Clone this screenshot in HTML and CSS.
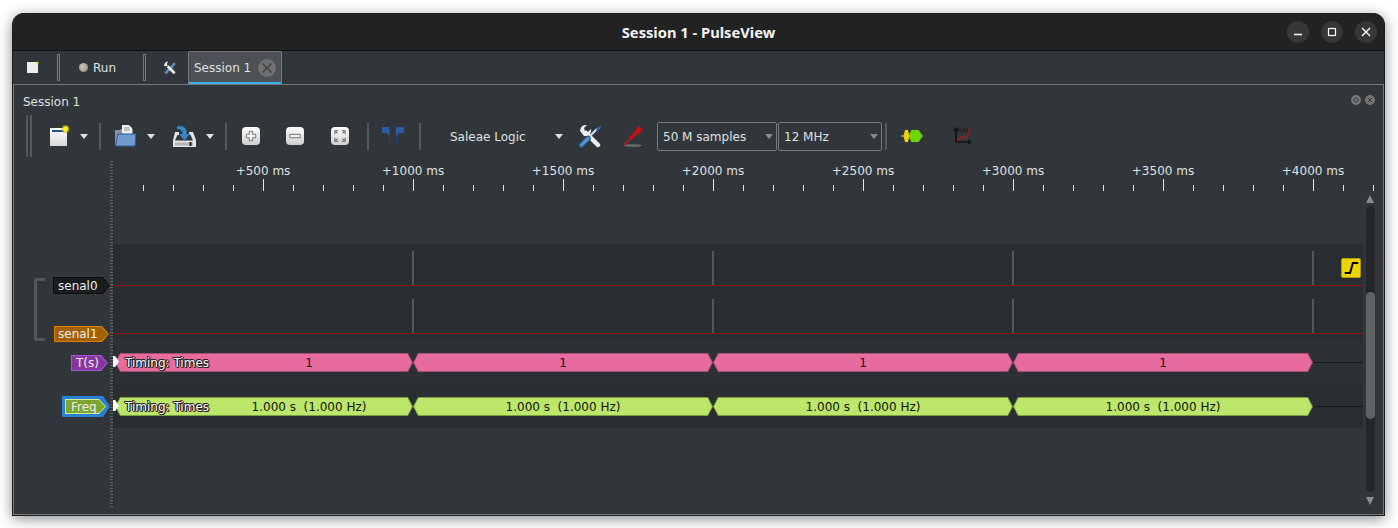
FILE: index.html
```html
<!DOCTYPE html>
<html lang="en">
<head>
<meta charset="utf-8">
<title>Session 1 - PulseView</title>
<link rel="stylesheet" href="styles.css">
</head>
<body>
<div class="window">
  <header class="titlebar">
    <div class="title">Session 1 - PulseView</div>
    <div class="winbtns">
      <div class="winbtn"><svg class="wi" viewBox="0 0 12 12"><path d="M2 8.500h8" stroke="#fff" stroke-width="1.400"/></svg></div>
      <div class="winbtn"><svg class="wi" viewBox="0 0 12 12"><rect x="2.500" y="2.500" width="7" height="7" fill="none" stroke="#fff" stroke-width="1.200"/></svg></div>
      <div class="winbtn"><svg class="wi" viewBox="0 0 12 12"><path d="M2 2l8 8M10 2l-8 8" stroke="#fff" stroke-width="1.400"/></svg></div>
    </div>
  </header>

  <nav class="tabbar">
    <svg class="tab-new" viewBox="0 0 12 12"><rect x="0" y="1" width="11" height="11" fill="#eee"/><circle cx="10" cy="2" r="1.500" fill="#e8dc5a"/></svg>
    <div class="tab-sep"></div>
    <div class="run"><span class="led"></span><span>Run</span></div>
    <div class="tab-sep"></div>
    <svg class="tab-tools" viewBox="0 0 24 24"><path d="M4 21L17 8" stroke="#5a93c9" stroke-width="4.500"/><path d="M20 21L8 9" stroke="#eee" stroke-width="4.500"/><path d="M2 8A6.500 6.500 0 0 1 9 1L6.500 4.500 8 8 4.500 9z" fill="#eee"/><path d="M15 6l4-4 3 3-4 4z" fill="#5a93c9"/></svg>
    <div class="tab"><span>Session 1</span><svg class="tab-close" viewBox="0 0 18 18"><circle cx="9" cy="9" r="9" fill="#707070"/><path d="M4.500 4.500l9 9M13.500 4.500l-9 9" stroke="#3a3a3a" stroke-width="1.200"/></svg></div>
  </nav>

  <main class="panel">
    <div class="dock-title">
      <span>Session 1</span>
      <div class="dock-btns">
        <svg class="dock-btn" viewBox="0 0 10 10"><circle cx="5" cy="5" r="5" fill="#767676"/><path d="M5 2.500L7.500 5 5 7.500 2.500 5z" fill="none" stroke="#333" stroke-width=".9"/></svg>
        <svg class="dock-btn" viewBox="0 0 10 10"><circle cx="5" cy="5" r="5" fill="#767676"/><path d="M2.800 2.800l4.400 4.400M7.200 2.800l-4.400 4.400" stroke="#333" stroke-width="1"/></svg>
      </div>
    </div>

    <div class="toolbar">
      <div class="handle"></div>
      <div class="btn ml8"><svg class="ic" viewBox="0 0 24 24"><defs><linearGradient id="paper" x1="0" y1="0" x2="0" y2="1"><stop offset="0" stop-color="#fff"/><stop offset="1" stop-color="#d8d8d8"/></linearGradient><radialGradient id="glow"><stop offset=".45" stop-color="#ffee20"/><stop offset="1" stop-color="#b8a820" stop-opacity=".5"/></radialGradient></defs><rect x="3" y="4" width="17" height="18" fill="url(#paper)"/><rect x="5" y="6" width="12" height="2" fill="#274f94"/><circle cx="18.500" cy="5" r="4" fill="url(#glow)"/></svg></div>
      <div class="arrow"></div>
      <div class="sep ml9"></div>
      <div class="btn ml5"><svg class="ic" viewBox="0 0 24 24"><path d="M2 6h5l1-1h12v17H2z" fill="#8d9299"/><path d="M9 1h7l3 3v10H9z" fill="#eee"/><path d="M11 4h5M11 6h6" stroke="#999"/><path d="M5 10h18l-1 12H2.500z" fill="#6f9bd1" stroke="#2b5c9f"/></svg></div>
      <div class="arrow ml1"></div>
      <div class="btn ml8"><svg class="ic" viewBox="0 0 24 24"><path d="M3 8h4v3H5.500L3 16.500h18L18.500 11H17V8h4l3 8v7H1v-7z" fill="#e4e4e4"/><rect x="3" y="18.500" width="18" height="3" fill="#b4b4b4"/><rect x="17.500" y="18" width="2" height="4" fill="#222"/><path d="M5 2.500c5-1.500 8.500.5 9.500 4.500v3h3.500l-5.500 6.500L7 10h3.500V8.500C9.500 6 7.500 5 5 5z" fill="#3c86c6" stroke="#1f5a92" stroke-width=".6"/></svg></div>
      <div class="arrow ml1"></div>
      <div class="sep ml9"></div>
      <div class="btn ml5"><div class="zoomkey"><svg class="zk" viewBox="0 0 14 14"><path d="M5 1.500h4v3.500h3.500v4H9v3.500H5V9H1.500V5H5z" fill="#f4f4f4" stroke="#666"/></svg></div></div>
      <div class="btn ml6"><div class="zoomkey"><svg class="zk" viewBox="0 0 14 14"><rect x="1" y="5" width="12" height="4" fill="#f4f4f4" stroke="#666"/></svg></div></div>
      <div class="btn ml7"><div class="zoomkey"><svg class="zk" viewBox="0 0 14 14"><path d="M1 5V1h4M2 2l2 2M9 1h4v4M12 2l-2 2M13 9v4H9M12 12l-2-2M5 13H1V9M2 12l2-2" fill="none" stroke="#666" stroke-width="1.200"/></svg></div></div>
      <div class="sep ml8"></div>
      <div class="btn ml5"><svg class="ic" viewBox="0 0 24 24"><path d="M1 3h8v9.500L6 9H1z" fill="#2a5ca8"/><path d="M8.500 3v18M15.500 3v18" stroke="#1d477f"/><path d="M15 3h8v6h-5l-3 3.500z" fill="#2a5ca8"/></svg></div>
      <div class="sep ml7"></div>
      <div class="device"><span>Saleae Logic</span><div class="arrow"></div></div>
      <div class="btn ml6"><svg class="ic" viewBox="0 0 24 24"><path d="M20 21L8 9" stroke="#f0f0f0" stroke-width="4.500" stroke-linecap="round"/><path d="M2 7A6 6 0 0 1 9 1L6 4l1 3 3 1 3-3a6 6 0 0 1-7 7z" fill="#f0f0f0"/><path d="M10 14l9-9" stroke="#cfe0f0" stroke-width="2.200"/><path d="M18 6l2-3 3-1-1 3-3 2z" fill="#2e6cab"/><path d="M3.500 21L10 14.500" stroke="#24588f" stroke-width="5.500" stroke-linecap="round"/><path d="M3.500 21L10 14.500" stroke="#5b96cf" stroke-width="3" stroke-linecap="round"/></svg></div>
      <div class="btn ml5"><svg class="ic" viewBox="0 0 24 24"><ellipse cx="12" cy="21.500" rx="9" ry="1.300" fill="#6a6a6a"/><path d="M3 21L10 14" stroke="#d01010" stroke-width="1.400"/><path d="M9 15l8-8" stroke="#c81010" stroke-width="3.800"/><path d="M16 8l4-4" stroke="#c81010" stroke-width="5.500"/></svg></div>
      <div class="combo ml5"><span>50 M samples</span><div class="arrow dim"></div></div>
      <div class="combo short ml1"><span>12 MHz</span><div class="arrow dim"></div></div>
      <div class="sep ml3"></div>
      <div class="btn ml5"><svg class="ic" viewBox="0 0 24 24"><path d="M2 12h22" stroke="#d8d8d8"/><path d="M4.500 12l1.500-6h3l1.500 6-1.500 6H6z" fill="#f0d000"/><path d="M10.500 10l2-4h7l3 4v4l-3 4h-7l-2-4z" fill="#6fd700"/></svg></div>
      <div class="btn ml13"><svg class="ic" viewBox="0 0 24 24"><path d="M6 5v13h14M4 7l2-3 2 3M18 16l3 2-3 2" fill="none" stroke="#111" stroke-width="1.500"/><path d="M7 17c2-1 3-5 5-4s3 2 5 0 1-5 3-9" fill="none" stroke="#b01818" stroke-width="1.200"/><text x="8" y="8" class="fx">f(x)</text></svg></div>
    </div>

    <section class="view">
      <div class="ruler">
        <div class="ruler-labels">
          <span>+500 ms</span><span>+1000 ms</span><span>+1500 ms</span><span>+2000 ms</span><span>+2500 ms</span><span>+3000 ms</span><span>+3500 ms</span><span>+4000 ms</span>
        </div>
        <div class="ticks"></div>
      </div>
      <div class="viewbody">
        <div class="rows">
          <div class="row-gap"></div>
          <div class="row sig">
            <div class="lab"><div class="tag t-black">senal0</div></div>
            <div class="trace dark"><div class="wave"><i></i><i></i><i></i><i></i></div><div class="trigger"><svg class="trig-ic" viewBox="0 0 20 20"><path d="M3 15.500h6L12 4.500h6" fill="none" stroke="#000" stroke-width="2.200"/></svg></div></div>
          </div>
          <div class="row sig">
            <div class="lab l2"><div class="tag t-orange">senal1</div></div>
            <div class="trace dark"><div class="wave"><i></i><i></i><i></i><i></i></div></div>
          </div>
          <div class="row dec">
            <div class="lab l3"><div class="tag t-purple">T(s)</div></div>
            <div class="trace mid">
              <div class="bars pink">
                <div class="bar first"><span class="cap">Timing: Times</span><span class="val">1</span></div>
                <div class="bar"><span class="val">1</span></div>
                <div class="bar"><span class="val">1</span></div>
                <div class="bar"><span class="val">1</span></div>
                <div class="tail"></div>
              </div>
              <div class="flag"></div>
            </div>
          </div>
          <div class="row dec">
            <div class="lab l4"><div class="tag t-green"><span>Freq</span></div></div>
            <div class="trace dark">
              <div class="bars lime">
                <div class="bar first"><span class="cap">Timing: Times</span><span class="val">1.000 s  (1.000 Hz)</span></div>
                <div class="bar"><span class="val">1.000 s  (1.000 Hz)</span></div>
                <div class="bar"><span class="val">1.000 s  (1.000 Hz)</span></div>
                <div class="bar"><span class="val">1.000 s  (1.000 Hz)</span></div>
                <div class="tail"></div>
              </div>
              <div class="flag"></div>
            </div>
          </div>
          <div class="bracket"></div>
        </div>
        <div class="vscroll">
          <div class="sb-up"></div>
          <div class="sb-track"><div class="sb-handle"></div></div>
          <div class="sb-down"></div>
        </div>
      </div>
      <div class="header-rule"></div>
    </section>
  </main>
</div>
</body>
</html>
```
FILE: styles.css
```css
* { box-sizing: border-box; }
html, body { margin: 0; height: 528px; overflow: hidden; background: #fff; }
body { padding: 13px 0 0 12px; font: 12px/1 "DejaVu Sans", sans-serif; color: #dfe1e2; }
.window {
  width: 1373px; height: 503px;
  background: #31363b;
  border: 1px solid #1c1c1c; border-top: 0;
  border-radius: 12px 12px 0 0;
  box-shadow: 0 3px 14px rgba(0,0,0,.45);
  display: flex; flex-direction: column;
  overflow: hidden;
}

/* title bar */
.titlebar {
  flex: none; height: 38px; background: #222;
  border-bottom: 1px solid #111;
  display: flex; align-items: center; justify-content: center;
  position: relative;
}
.title { font: 700 14.700px "Noto Sans", sans-serif; color: #f2f2f2; }
.winbtns { position: absolute; right: 7px; top: 8px; display: flex; gap: 12px; }
.winbtn { width: 22px; height: 22px; border-radius: 50%; background: #373737; display: flex; align-items: center; justify-content: center; }
.wi { width: 12px; height: 12px; }

/* tab bar */
.tabbar { flex: none; height: 33px; display: flex; align-items: center; padding-left: 14px; background: #31363b; }
.tab-new { width: 12px; height: 12px; margin: -2px 18px 0 0; }
.tab-sep { width: 3px; height: 27px; border: 1px solid #76797c; }
.run { width: 83px; display: flex; align-items: center; gap: 5px; padding-left: 19px; font-size: 12px; }
.led { width: 9px; height: 9px; border-radius: 50%; background: radial-gradient(circle at 40% 40%, #c9c9c0, #84847c); }
.tab-tools { width: 14px; height: 14px; margin: 0 11px 0 17px; }
.tab {
  width: 94px; height: 33px; align-self: flex-end;
  background: #4d5156; border: 1px solid #76797c; border-bottom: 0; border-radius: 2px 2px 0 0;
  box-shadow: inset 0 -2px 0 #3daee9;
  display: flex; align-items: center; justify-content: space-between; padding: 0 5px 1px 5px;
}
.tab-close { width: 18px; height: 18px; }

/* dock panel */
.panel { flex: 1; border: 1px solid #76797c; display: flex; flex-direction: column; min-height: 0; }
.dock-title { flex: none; height: 27px; padding: 11px 8px 0 9px; display: flex; justify-content: space-between; }
.dock-btns { display: flex; gap: 4px; margin-top: -1px; }
.dock-btn { width: 10px; height: 10px; }

/* toolbar */
.toolbar { flex: none; height: 48px; padding-left: 12px; display: flex; align-items: center; }
.handle { width: 6px; height: 42px; border-left: 2px solid #55595d; border-right: 2px solid #55595d; }
.btn { width: 38px; height: 30px; flex: none; display: flex; align-items: center; justify-content: center; }
.ic { width: 24px; height: 24px; }
.arrow { width: 12px; flex: none; height: 5px; position: relative; }
.arrow::after { content: ""; position: absolute; left: 2px; top: 0; border: 4px solid transparent; border-top: 5px solid #dfe1e2; border-bottom: 0; }
.arrow.dim::after { border-top-color: #8a8d90; }
.sep { width: 2px; height: 27px; flex: none; background: #55595d; }
.ml1 { margin-left: 1px; } .ml3 { margin-left: 3px; } .ml5 { margin-left: 5px; } .ml6 { margin-left: 6px; }
.ml7 { margin-left: 7px; } .ml8 { margin-left: 8px; } .ml9 { margin-left: 9px; } .ml13 { margin-left: 13px; }
.zoomkey { width: 18px; height: 18px; border-radius: 4px; background: linear-gradient(#fff, #cfcfcf); display: flex; align-items: center; justify-content: center; }
.zk { width: 12px; height: 12px; }
.fx { font: 6px "DejaVu Sans", sans-serif; fill: #111; }
.device { width: 136px; margin-left: 8px; flex: none; padding: 1px 0 0 21px; display: flex; align-items: center; justify-content: space-between; }
.combo { width: 120px; height: 29px; flex: none; border: 1px solid #76797c; border-radius: 2px; display: flex; align-items: center; justify-content: space-between; padding: 1px 1px 0 5px; }
.combo.short { width: 104px; }

/* trace view */
.view { flex: 1; display: flex; flex-direction: column; position: relative; min-height: 0; }
.ruler { flex: none; height: 32px; padding-left: 99px; }
.ruler-labels { height: 19px; padding: 2px 0 0 75px; display: flex; align-items: center; }
.ruler-labels span { width: 150px; flex: none; text-align: center; }
.ticks {
  margin-left: 30px; width: 1231px; height: 12px;
  background:
    repeating-linear-gradient(90deg, transparent 0 120px, #e6e6e6 120px 121px, transparent 121px 150px) top / 100% 12px no-repeat,
    repeating-linear-gradient(90deg, #e6e6e6 0 1px, transparent 1px 30px) bottom / 100% 6px no-repeat;
}
.viewbody { flex: 1; display: flex; min-height: 0; }
.rows { width: 1349px; flex: none; position: relative; }
.row-gap { height: 52px; }
.row { display: flex; }
.row.sig { height: 48px; }
.row.dec { height: 44px; }
.lab { width: 99px; flex: none; display: flex; justify-content: flex-end; align-items: flex-start; padding: 33px 3px 0 0; height: 0; overflow: visible; }
.l2 { padding: 34px 4px 0 0; }
.l3 { padding: 15px 5px 0 0; }
.l4 { padding: 12px 3px 0 0; }
.trace { flex: 1; position: relative; }
.trace.dark { background: #2a2e32; }
.trace.mid { background: #2d3135; }

.tag {
  position: relative; flex: none; isolation: isolate;
  display: flex; align-items: center;
  clip-path: polygon(0 0, calc(100% - 7px) 0, 100% 50%, calc(100% - 7px) 100%, 0 100%);
  color: #eee;
}
.tag::before { content: ""; position: absolute; inset: 1px; z-index: -1; clip-path: polygon(0 0, calc(100% - 7px) 0, 100% 50%, calc(100% - 7px) 100%, 0 100%); }
.t-black { width: 57px; height: 17px; background: #0c0d0e; padding-left: 5px; }
.t-black::before { background: #1a1c1e; }
.t-orange { width: 55px; height: 16px; background: #e08000; padding-left: 4px; }
.t-orange::before { background: #a45f00; }
.t-purple { width: 37px; height: 16px; background: #a555db; padding-left: 5px; }
.t-purple::before { background: #87369f; }
.t-green { width: 48px; height: 21px; background: #2a80d4; padding-left: 9px; }
.t-green::before { inset: 3px 4px 3px 3px; background: #d4f08c; }
.t-green::after { content: ""; position: absolute; inset: 4px 5px 4px 4px; background: #7ea52f; clip-path: polygon(0 0, calc(100% - 6px) 0, 100% 50%, calc(100% - 6px) 100%, 0 100%); }
.t-green span { position: relative; z-index: 1; }

.wave { height: 35px; border-bottom: 1px solid #8e1518; display: flex; }
.row.sig .trace { padding-top: 7px; }
.wave i { width: 300px; flex: none; box-shadow: 1px 0 0 #54585c, inset -1px 0 0 #54585c; }
.trigger { position: absolute; right: 2px; top: 14px; width: 20px; height: 20px; background: #edd400; border: 1px solid #b29a10; border-radius: 2px; }
.trig-ic { display: block; width: 18px; height: 18px; }

.bars { display: flex; align-items: center; height: 19px; margin: 13px 0 0 2px; color: #111; }
.bar {
  width: 300px; height: 19px; flex: none; display: flex; align-items: center;
  padding: 0 5px;
  position: relative; isolation: isolate;
  clip-path: polygon(0 50%, 5px 0, calc(100% - 5px) 0, 100% 50%, calc(100% - 5px) 100%, 5px 100%);
}
.bar::before { content: ""; position: absolute; inset: 1px 0; z-index: -1; clip-path: polygon(1px 50%, 5.500px 0, calc(100% - 5.500px) 0, calc(100% - 1px) 50%, calc(100% - 5.500px) 100%, 5.500px 100%); }
.bar.first { width: 298px; padding-left: 10px; }
.cap { color: #fff; text-shadow: 1px 0 0 #222, -1px 0 0 #222, 0 1px 0 #222, 0 -1px 0 #222, 1px 1px 0 #222, -1px -1px 0 #222; width: 85px; flex: none; white-space: nowrap; }
.val { flex: 1; text-align: center; white-space: pre; }
.pink .bar { background: #a4506f; }
.pink .bar::before { background: #e86ba0; }
.lime .bar { background: #78a040; }
.lime .bar::before { background: #bde76b; }
.tail { flex: 1; height: 1px; background: #17191b; }
.flag { position: absolute; z-index: 1; left: 0; top: 16px; width: 6px; height: 11px; background: #fff; clip-path: polygon(0 0, 35% 0, 100% 50%, 35% 100%, 0 100%); }

.bracket { position: absolute; left: 20px; top: 86px; width: 11px; height: 63px; border: 3px solid #55585a; border-right: 0; border-radius: 3px 0 0 3px; }

/* scrollbar */
.vscroll { width: 9px; margin-left: 3px; padding-top: 3px; display: flex; flex-direction: column; align-items: flex-start; }
.sb-up { flex: none; border: 4px solid transparent; border-top: 0; border-bottom: 8px solid #8a8d90; }
.sb-down { flex: none; border: 4px solid transparent; border-bottom: 0; border-top: 8px solid #8a8d90; margin-top: 5px; }
.sb-track { flex: none; margin-top: 3px; width: 9px; height: 286px; border-radius: 5px; background: #232528; padding-top: 86px; }
.sb-handle { height: 127px; border-radius: 5px; background: #616264; }

.header-rule {
  position: absolute; left: 96px; top: 1px; width: 4px; height: 346px;
  background:
    repeating-linear-gradient(#1c1c8c 0 3px, transparent 3px 6px) right 0 top 30px / 1px 100% no-repeat,
    repeating-linear-gradient(#63676b 0 1px, transparent 1px 3px) left / 3px 100% no-repeat;
}
```
